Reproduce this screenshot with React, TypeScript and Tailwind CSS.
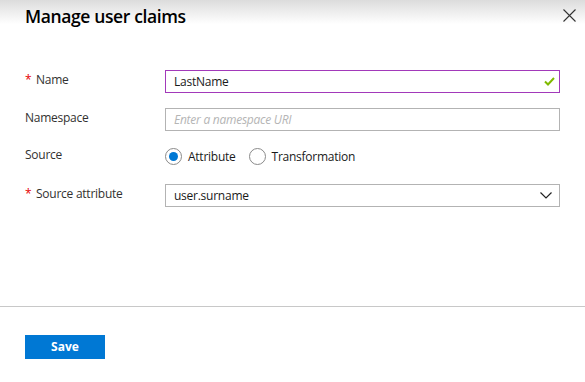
import React from "react";

export default function App() {
  const font = { fontFamily: '"Open Sans", "Noto Sans", sans-serif' };
  return (
    <div className="w-[585px] h-[382px] bg-white flex flex-col text-[#323130]" style={font}>
      <div className="h-[40px] bg-gradient-to-b from-[#dcdcdc] via-[#ffffff] via-60% to-[#ffffff] flex items-start justify-between pl-[25px] pr-[9px]">
        <h1 className="mt-[4px] text-[17.5px] leading-[24px] font-semibold text-black tracking-[-0.38px]">Manage user claims</h1>
        <svg className="mt-[9px]" width="13" height="13" viewBox="0 0 13 13">
          <path d="M0.5 0.5 L12.5 12.5 M12.5 0.5 L0.5 12.5" stroke="#333" strokeWidth="1.1" fill="none" />
        </svg>
      </div>

      <div className="flex flex-col pl-[25px] pr-[25px] mt-[30px] text-[12px] tracking-[-0.25px]">
        <div className="flex items-start">
          <div className="w-[140px] pt-[1px] leading-[18px] flex">
            <span className="text-[#e50000] w-[11px]">*</span>
            <span>Name</span>
          </div>
          <div className="w-[395px] h-[23px] border border-[#a239ba] flex items-center justify-between pl-[8px] pr-[4px]">
            <span className="text-[#1a1a1a]">LastName</span>
            <svg width="11" height="9" viewBox="0 0 11 9">
              <path d="M1 4.5 L4 7.5 L10 1" stroke="#7fba00" strokeWidth="2" fill="none" />
            </svg>
          </div>
        </div>

        <div className="flex items-start mt-[15px]">
          <div className="w-[140px] pt-[1px] leading-[18px]">Namespace</div>
          <div className="w-[395px] h-[23px] border border-[#b3b3b3] flex items-center pl-[8px]">
            <span className="italic text-[#b5b5b5]">Enter a namespace URI</span>
          </div>
        </div>

        <div className="flex items-center mt-[14px] h-[23px]">
          <div className="w-[140px] leading-[18px] -mt-[4px]">Source</div>
          <div className="flex items-center">
            <span className="w-[17px] h-[17px] rounded-full border border-[#8a8a8a] flex items-center justify-center">
              <span className="w-[9px] h-[9px] rounded-full bg-[#0078d4]" />
            </span>
            <span className="ml-[6px] text-[#1a1a1a]">Attribute</span>
            <span className="ml-[13px] w-[17px] h-[17px] rounded-full border border-[#8a8a8a]" />
            <span className="ml-[6px] text-[#1a1a1a]">Transformation</span>
          </div>
        </div>

        <div className="flex items-start mt-[16px]">
          <div className="w-[140px] pt-[1px] leading-[18px] flex">
            <span className="text-[#e50000] w-[11px]">*</span>
            <span>Source attribute</span>
          </div>
          <div className="w-[395px] h-[23px] border border-[#b3b3b3] flex items-center justify-between pl-[8px] pr-[7px]">
            <span className="text-[#1a1a1a]">user.surname</span>
            <svg width="12" height="7" viewBox="0 0 12 7">
              <path d="M0.5 0.5 L6 6 L11.5 0.5" stroke="#222" strokeWidth="1.2" fill="none" />
            </svg>
          </div>
        </div>
      </div>

      <div className="mt-auto border-t border-[#c8c8c8] h-[76px] pl-[25px] pt-[26px]">
        <button className="w-[80px] h-[24px] bg-[#0078d4] text-white text-[12px] font-bold">Save</button>
      </div>
    </div>
  );
}
